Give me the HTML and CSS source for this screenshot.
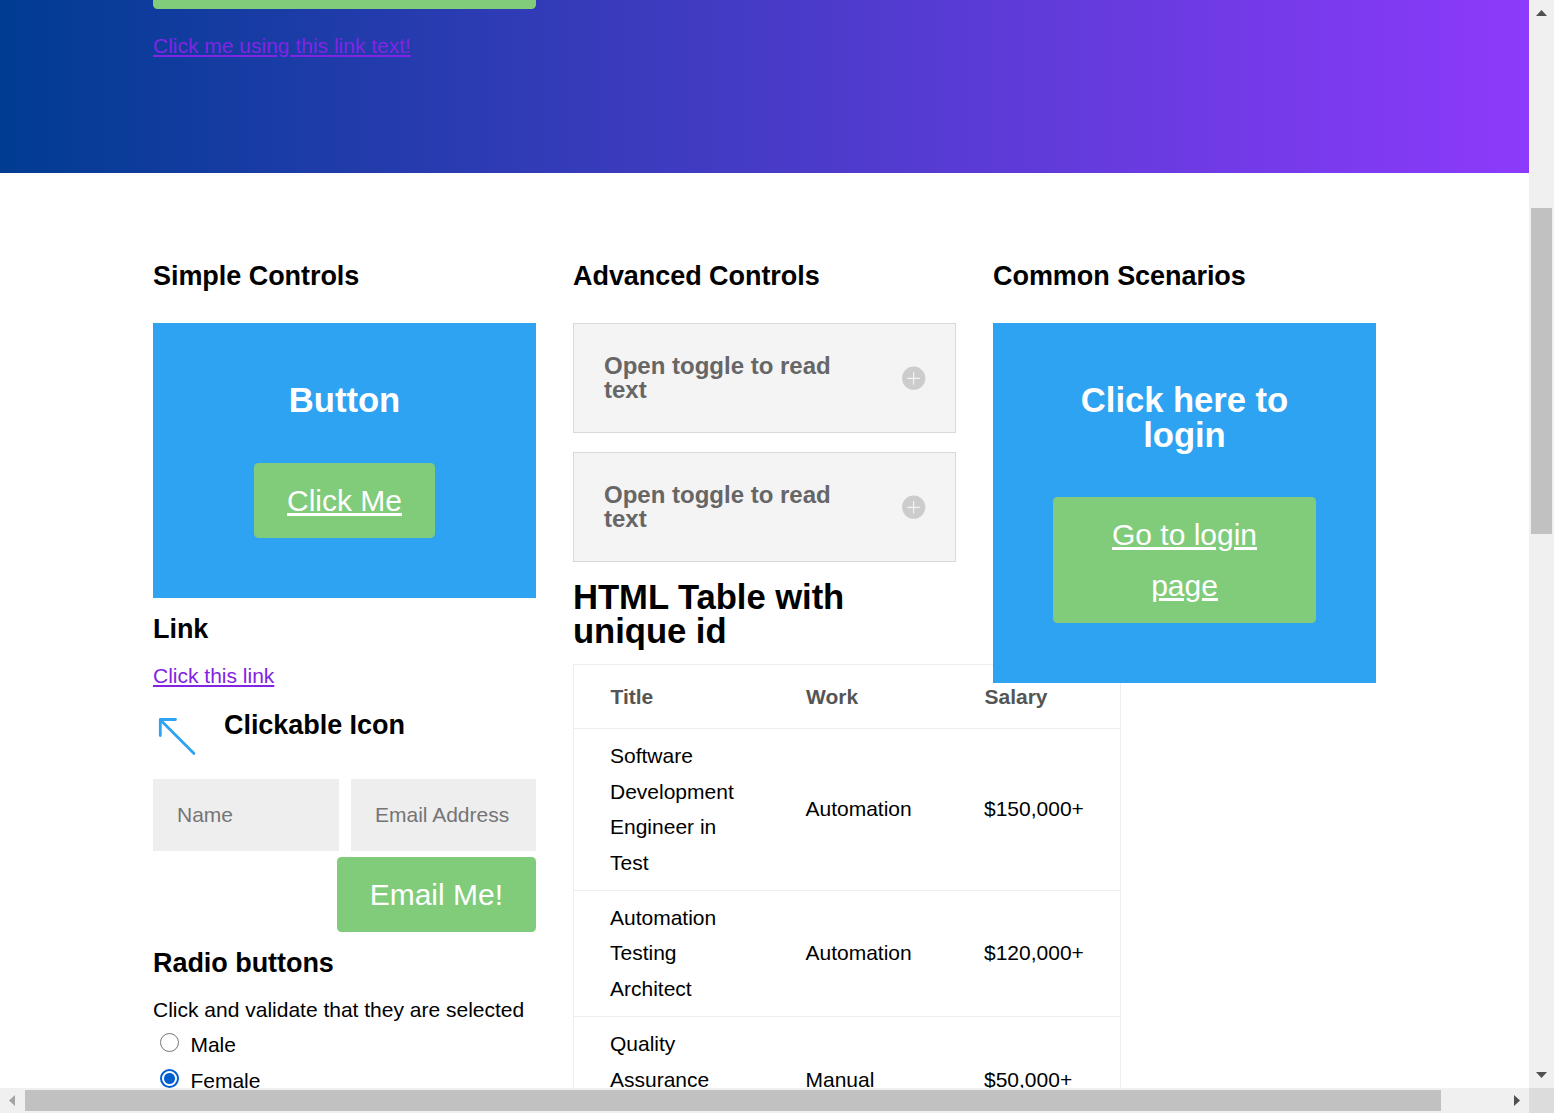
FILE: index.html
```html
<!DOCTYPE html>
<html lang="en">
<head>
<meta charset="utf-8">
<title>Simple HTML Elements</title>
<link rel="stylesheet" href="styles.css">
</head>
<body>
<div class="frame">
  <main class="viewport">
    <section class="hero">
      <div class="hero-button"></div>
      <a class="link hero-link" href="#">Click me using this link text!</a>
    </section>
    <section class="columns">
      <div class="column">
        <h4 class="title section-title">Simple Controls</h4>
        <div class="promo">
          <h2 class="heading">Button</h2>
          <a class="button" href="#">Click Me</a>
        </div>
        <h4 class="title link-title">Link</h4>
        <p class="text"><a class="link" href="#">Click this link</a></p>
        <div class="blurb">
          <svg class="arrow" width="48" height="48" viewBox="0 0 48 48"><path d="M41 41.5L7.5 8M22.500 7.500H7.300V23.500" fill="none" stroke="#2ea3f2" stroke-width="2.8" stroke-linecap="round" stroke-linejoin="round"/></svg>
          <h4 class="title">Clickable Icon</h4>
        </div>
        <form class="form">
          <div class="fields">
            <input class="field" type="text" placeholder="Name">
            <input class="field" type="text" placeholder="Email Address">
          </div>
          <button class="button submit" type="button">Email Me!</button>
        </form>
        <h4 class="title radio-title">Radio buttons</h4>
        <p class="text">Click and validate that they are selected</p>
        <label class="option"><input class="radio" type="radio" name="gender"><span>Male</span></label>
        <label class="option"><input class="radio" type="radio" name="gender" checked><span>Female</span></label>
      </div>
      <div class="column">
        <h4 class="title section-title">Advanced Controls</h4>
        <div class="toggle">
          <h5 class="toggle-title">Open toggle to read text</h5>
          <svg class="plus" width="24" height="24" viewBox="0 0 24 24"><circle cx="11.700" cy="12.200" r="11.6" fill="#ccc"/><path d="M11.600 6v12.400M5.400 12.400h12.400" stroke="#f4f4f4" stroke-width="1.200"/></svg>
        </div>
        <div class="toggle">
          <h5 class="toggle-title">Open toggle to read text</h5>
          <svg class="plus" width="24" height="24" viewBox="0 0 24 24"><circle cx="11.700" cy="12.200" r="11.6" fill="#ccc"/><path d="M11.600 6v12.400M5.400 12.400h12.400" stroke="#f4f4f4" stroke-width="1.200"/></svg>
        </div>
        <h2 class="heading table-title">HTML Table with unique id</h2>
        <table class="table">
          <thead><tr><th class="c-title">Title</th><th class="c-work">Work</th><th>Salary</th></tr></thead>
          <tbody>
            <tr><td>Software Development Engineer in Test</td><td>Automation</td><td>$150,000+</td></tr>
            <tr><td>Automation Testing Architect</td><td>Automation</td><td>$120,000+</td></tr>
            <tr><td>Quality Assurance Engineer</td><td>Manual</td><td>$50,000+</td></tr>
          </tbody>
        </table>
      </div>
      <div class="column">
        <h4 class="title section-title">Common Scenarios</h4>
        <div class="promo">
          <h2 class="heading">Click here to login</h2>
          <a class="button" href="#">Go to login page</a>
        </div>
      </div>
    </section>
  </main>
  <div class="bar bar-v">
    <svg class="tip" width="25" height="25" viewBox="0 0 25 25"><path d="M7 16L12.500 10L18 16Z" fill="#505050"/></svg>
    <div class="thumb"></div>
    <svg class="tip" width="25" height="25" viewBox="0 0 25 25"><path d="M7 9L12.500 15L18 9Z" fill="#505050"/></svg>
  </div>
  <div class="bar bar-h">
    <svg class="tip" width="25" height="25" viewBox="0 0 25 25"><path d="M15 7L9 12.500L15 18Z" fill="#a3a3a3"/></svg>
    <div class="thumb"></div>
    <svg class="tip" width="25" height="25" viewBox="0 0 25 25"><path d="M10 7L16 12.500L10 18Z" fill="#505050"/></svg>
  </div>
  <div class="corner"></div>
</div>
</body>
</html>
```
FILE: styles.css
```css
* { box-sizing: border-box; margin: 0; padding: 0; }
body {
  font: 21px/35.7px "Liberation Sans", Arial, sans-serif;
  color: #000;
  background: #fff;
  overflow: hidden;
}
.frame {
  display: grid;
  grid-template: 1088px 25px / 1529px 25px;
  width: 1554px;
  height: 1113px;
}
.viewport { overflow: hidden; }
.hero {
  height: 173px;
  padding: 0 153px;
  background: linear-gradient(90deg, #003c92, #8d3afb);
}
.hero-button {
  width: 383px;
  height: 9px;
  margin-bottom: 19px;
  background: #80cc7a;
  border-radius: 0 0 4.5px 4.5px;
}
.hero-link { display: block; }
.link { color: #8224e3; }
.columns {
  display: grid;
  grid-template-columns: repeat(3, 383px);
  column-gap: 37px;
  align-items: start;
  padding: 90px 153px 0;
}
.column { position: relative; min-width: 0; }
.title { font-size: 27px; line-height: 27px; letter-spacing: -0.05px; }
.section-title { margin-bottom: 33px; }
.heading { font-size: 34.65px; line-height: 34.65px; letter-spacing: -0.05px; }
.promo {
  padding: 60px;
  text-align: center;
  color: #fff;
  background: #2ea3f2;
}
.promo .heading { margin-bottom: 45px; }
.button {
  display: inline-block;
  vertical-align: top;
  padding: 12px 33px;
  border: 0;
  border-radius: 4.5px;
  font: 30px/51px "Liberation Sans", Arial, sans-serif;
  color: #fff;
  background: #80cc7a;
}
.link-title { margin: 18px 0 15px; }
.blurb { display: flex; gap: 23px; height: 67px; margin-top: 18.6px; }
.arrow { flex: none; }
.form { display: flex; flex-direction: column; }
.fields { display: grid; grid-template-columns: 186px 185px; gap: 12px; }
.field {
  width: 100%;
  height: 72px;
  padding: 0 24px;
  border: 0;
  font: 21px "Liberation Sans", Arial, sans-serif;
  background: #eee;
}
.field::placeholder { color: #757575; }
.submit { align-self: flex-end; margin-top: 6px; }
.radio-title { margin: 17.6px 0 15px; }
.option { display: flex; height: 35.7px; }
.option span { padding-left: 0.4px; }
.radio {
  appearance: none;
  width: 19px;
  height: 19px;
  margin: 6px 11px 0 7px;
  border: 1.5px solid #767676;
  border-radius: 50%;
}
.radio:checked {
  border: 2px solid #005fcc;
  background: radial-gradient(circle, #005fcc 5px, #fff 6px);
}
.toggle {
  display: flex;
  align-items: center;
  justify-content: space-between;
  height: 110px;
  margin-bottom: 19px;
  padding: 0 29px 0 30px;
  border: 1px solid #d9d9d9;
  background: #f4f4f4;
}
.toggle-title { width: 240px; font-size: 24px; line-height: 24px; color: #666; }
.table-title { margin: -1.2px 0 14.9px; }
.table {
  width: 548px;
  table-layout: fixed;
  border: 1px solid #eee;
  border-collapse: separate;
  border-spacing: 0;
}
.c-title { width: 195.5px; }
.c-work { width: 178.5px; }
.table th {
  padding: 13.7px 36.5px 13.5px;
  text-align: left;
  color: #555;
}
.table td { padding: 9px 36px; border-top: 1px solid #eee; }
.bar { display: flex; background: #f0f0f0; }
.bar-v { flex-direction: column; justify-content: space-between; }
.bar-v .thumb { width: 21px; height: 326px; margin: 183px 2px auto; background: #c1c1c1; }
.bar-h .thumb { width: 1416px; height: 21px; margin: 2px auto 2px 0; background: #c1c1c1; }
.tip { flex: none; }
.corner { background: #dcdcdc; }
```
